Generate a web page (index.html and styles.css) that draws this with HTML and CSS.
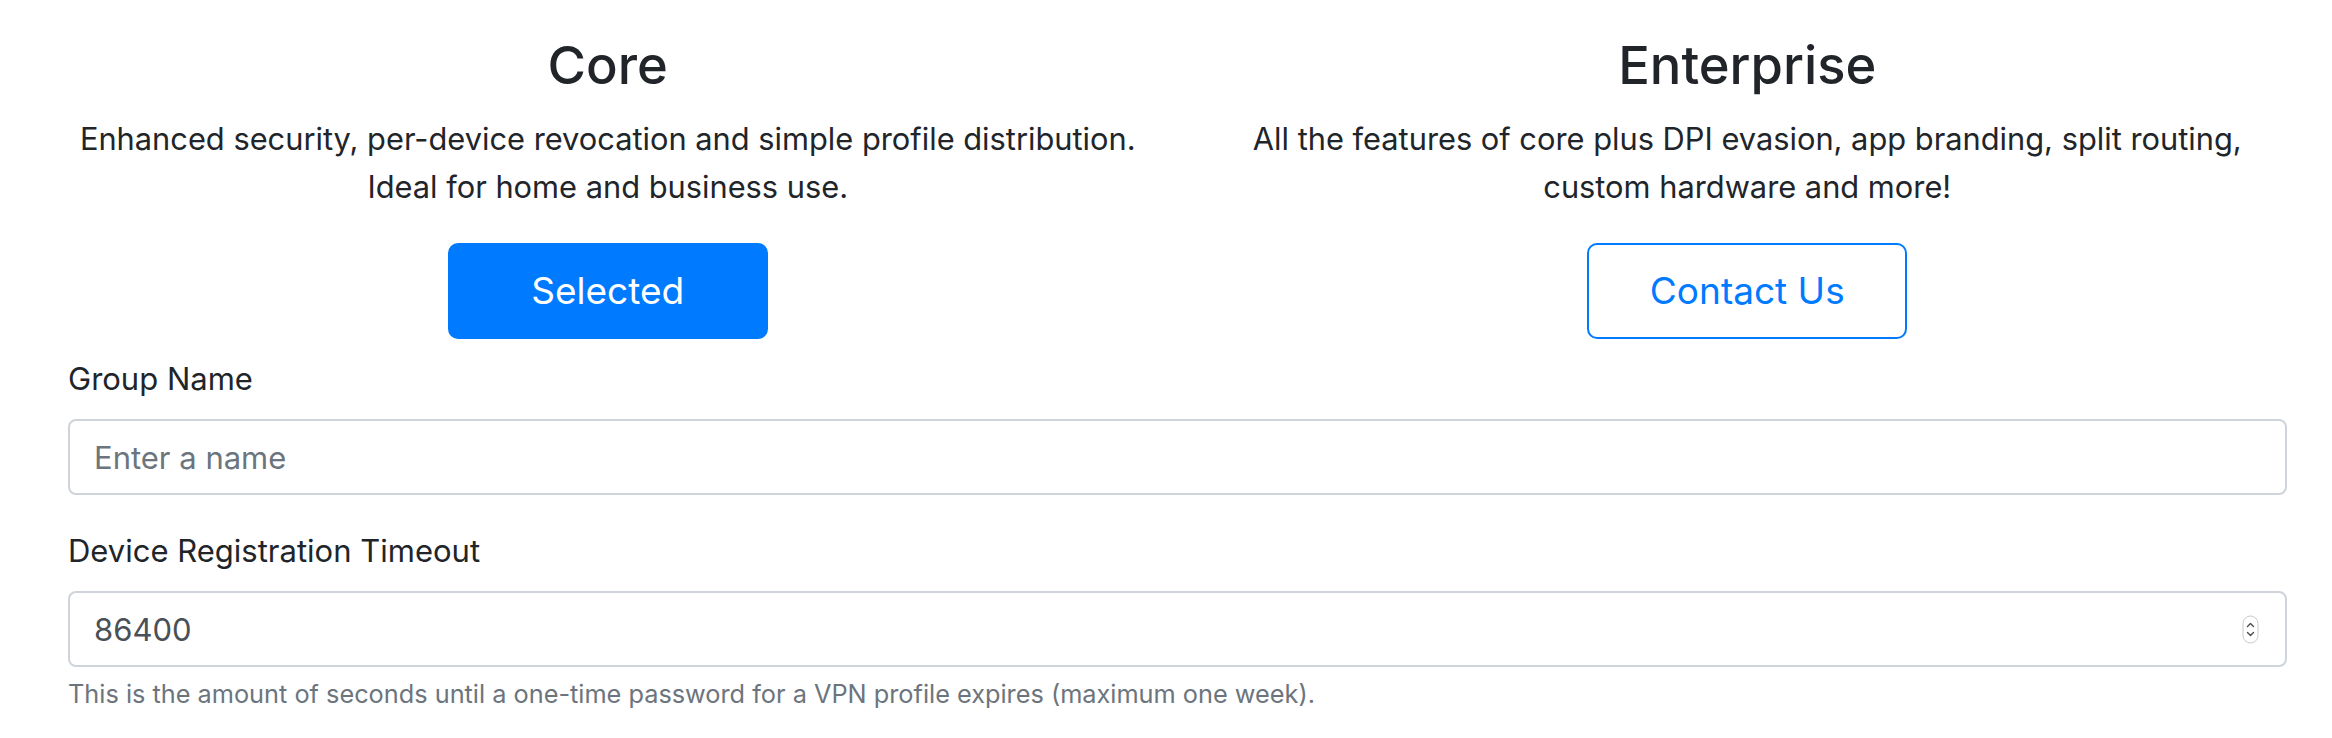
FILE: index.html
```html
<!DOCTYPE html>
<html lang="en">
<head>
<meta charset="utf-8">
<title>Plan</title>
<link rel="stylesheet" href="styles.css">
</head>
<body>
<div class="page">
  <div class="plans">
    <div class="plan">
      <h3 class="plan-title">Core</h3>
      <p class="plan-desc">Enhanced security, per-device revocation and simple profile distribution.<br>Ideal for home and business use.</p>
      <button class="btn btn-primary" type="button">Selected</button>
    </div>
    <div class="plan">
      <h3 class="plan-title">Enterprise</h3>
      <p class="plan-desc">All the features of core plus DPI evasion, app branding, split routing,<br>custom hardware and more!</p>
      <button class="btn btn-outline" type="button">Contact Us</button>
    </div>
  </div>
  <form class="form">
    <div class="form-group">
      <label class="form-label" for="group-name">Group Name</label>
      <input class="form-control" id="group-name" type="text" placeholder="Enter a name">
    </div>
    <div class="form-group">
      <label class="form-label" for="timeout">Device Registration Timeout</label>
      <div class="number-field">
        <input class="form-control" id="timeout" type="text" value="86400">
        <svg class="spinner" width="17" height="29" viewBox="0 0 17 29" aria-hidden="true">
          <rect x="1" y="1" width="15" height="27" rx="7.5" fill="#fff" stroke="#c9c9cc" stroke-width="1"/>
          <path d="M5.5 11.5 L8.5 8.5 L11.5 11.5" fill="none" stroke="#4a4a4a" stroke-width="1.4" stroke-linecap="round" stroke-linejoin="round"/>
          <path d="M5.5 17.5 L8.5 20.5 L11.5 17.5" fill="none" stroke="#4a4a4a" stroke-width="1.4" stroke-linecap="round" stroke-linejoin="round"/>
        </svg>
      </div>
      <small class="form-text">This is the amount of seconds until a one-time password for a VPN profile expires (maximum one week).</small>
    </div>
  </form>
</div>
</body>
</html>
```
FILE: styles.css
```css
* {
  box-sizing: border-box;
}

body {
  margin: 0;
  background: #fff;
  color: #212529;
  font-family: Inter, "Noto Sans", "Liberation Sans", sans-serif;
  font-size: 31px;
  line-height: 48px;
}

.page {
  padding: 32px 45px 0 68px;
}

.plans {
  display: grid;
  grid-template-columns: 1fr 1fr;
  margin: 0 -30px 16px;
}

.plan {
  padding: 0 30px;
  text-align: center;
}

.plan-title {
  margin: 0 0 16px;
  font-size: 52.5px;
  line-height: 67px;
  font-weight: 500;
}

.plan-desc {
  margin: 0 0 32px;
  font-size: 30.8px;
  line-height: 48px;
  white-space: nowrap;
}

.btn {
  width: 320px;
  height: 96px;
  padding: 16px 32px;
  font-family: inherit;
  font-size: 37px;
  line-height: 60px;
  font-weight: 400;
  border: 2px solid #007bff;
  border-radius: 10px;
  cursor: pointer;
}

.btn-primary {
  background: #007bff;
  color: #fff;
}

.btn-outline {
  background: #fff;
  color: #007bff;
}

.form-group {
  margin-bottom: 32px;
}

.form-label {
  display: block;
  margin-bottom: 16px;
  font-size: 31px;
  line-height: 48px;
}

.form-control {
  display: block;
  width: 100%;
  height: 76px;
  padding: 12px 24px;
  font-family: inherit;
  font-size: 31px;
  line-height: 48px;
  color: #495057;
  background: #fff;
  border: 2px solid #ced4da;
  border-radius: 8px;
}

.form-control::placeholder {
  color: #6c757d;
  opacity: 1;
}

.number-field {
  position: relative;
}

.spinner {
  position: absolute;
  right: 28px;
  top: 24px;
}

.form-text {
  display: block;
  margin-top: 8px;
  font-size: 25.3px;
  line-height: 38px;
  color: #6c757d;
}
```
